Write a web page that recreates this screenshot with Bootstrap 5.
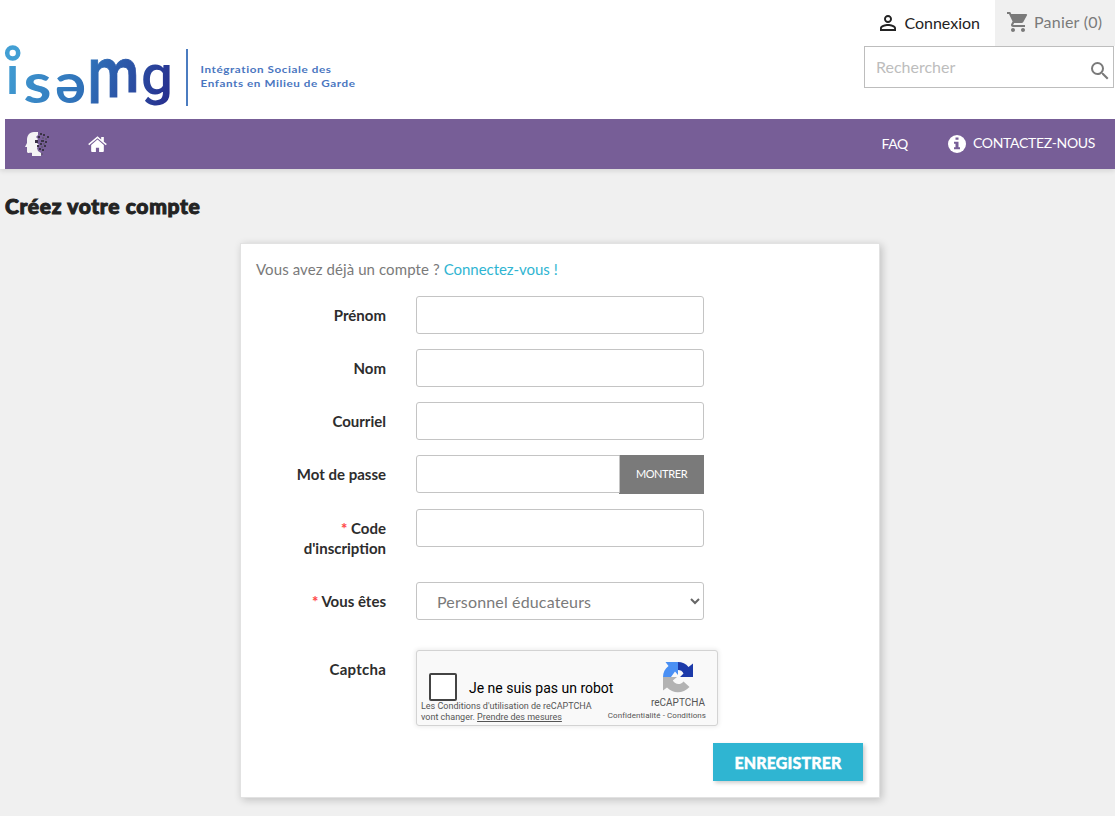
<!DOCTYPE html>
<html lang="fr">
<head>
  <meta charset="UTF-8" />
  <meta name="viewport" content="width=device-width, initial-scale=1" />
  <title>ISEMG - Créez votre compte</title>
  <link href="https://cdn.jsdelivr.net/npm/bootstrap@5.3.0/dist/css/bootstrap.min.css" rel="stylesheet" />
  <style>
    body {
      background-color: #f0f0f0;
      color: #7a7a7a;
      font-family: Lato, "Open Sans", sans-serif;
      font-size: 15px;
      line-height: 20px;
      height: 816px;
      overflow: hidden;
    }
    .site-header {
      height: 169px;
      background: #fff;
      box-shadow: 0 2px 5px 0 rgba(0, 0, 0, .11);
    }
    .header-top {
      height: 119px;
    }
    .site-logo {
      width: 365px;
      height: 75px;
      margin-top: 40px;
      overflow: visible;
    }
    .header-tools {
      width: 251px;
    }
    .user-links {
      height: 46px;
    }
    .login-link {
      color: #232323;
      font-size: 16px;
      padding-right: 15px;
    }
    .cart-link {
      width: 120px;
      background: #f0f0f0;
      font-size: 16px;
      padding: 0 0 2px 11px;
      letter-spacing: .22px;
    }
    .search-box {
      width: 250px;
      height: 42px;
      border: 1px solid #bdbdbd;
      padding: 0 1px 0 11px;
    }
    .search-box input {
      width: 200px;
      padding: 0;
      font-size: 16px;
    }
    .search-box input::placeholder {
      color: #bdbdbd;
    }
    .main-menu {
      height: 50px;
      margin-left: 5px;
      padding: 0 20px;
      background: #775e97;
      color: #fff;
      font-size: 14px;
    }
    .menu-home {
      margin-left: 38px;
      margin-top: 1px;
    }
    .menu-faq {
      letter-spacing: -.3px;
      margin-right: 40px;
    }
    .menu-info {
      margin-right: 7px;
    }
    .menu-contact {
      letter-spacing: -.33px;
      padding-bottom: 2px;
    }
    .page-title {
      margin: 26px 0 0 5px;
      font-family: Lato, sans-serif;
      font-size: 21px;
      line-height: 22px;
      font-weight: 900;
      letter-spacing: .66px;
      color: #232323;
      -webkit-text-stroke: 1px #232323;
    }
    .account-box {
      width: 640px;
      height: 555px;
      margin: 26px 0 0 240px;
      padding: 15px 16px 0 15px;
      background: #fff;
      border: 1px solid #e2e2e2;
      box-shadow: 2px 2px 8px 0 rgba(0, 0, 0, .2);
    }
    .have-account {
      margin-bottom: 17px;
      letter-spacing: .09px;
    }
    .link-cyan {
      color: #2fb5d2;
      letter-spacing: -.03px;
    }
    .form-line {
      height: 38px;
      margin-bottom: 15px;
    }
    .form-line label {
      flex: 0 0 130px;
      margin-right: 30px;
      text-align: right;
      font-weight: 700;
      color: #2d2d2d;
      padding-top: 9px;
    }
    .form-line .form-control {
      width: 288px;
      height: 38px;
      border-color: #c4c4c4;
      border-radius: 3px;
    }
    .form-line .input-group {
      width: 288px;
    }
    .line-code {
      height: 58px;
      margin-top: 16px;
    }
    .line-captcha {
      height: 76px;
      margin-top: 30px;
      margin-bottom: 17px;
    }
    .line-captcha label {
      letter-spacing: .25px;
    }
    .req {
      color: #ff4c4c;
      font-weight: 900;
    }
    .btn-show {
      width: 85px;
      height: 39px;
      padding: 0;
      border: 0;
      background: #7a7a7a;
      color: #fff;
      font-size: 11px;
      line-height: 18px;
      padding-bottom: 2px;
      letter-spacing: -.4px;
    }
    .role-select {
      padding: 2px 3px 0 20px;
      font-size: 16px;
      letter-spacing: .15px;
      color: #7a7a7a;
      appearance: none;
      background: #fff url("data:image/svg+xml,%3Csvg xmlns='http://www.w3.org/2000/svg' viewBox='0 0 10 7'%3E%3Cpath d='M1 1l4 4 4-4' fill='none' stroke='%23666' stroke-width='2'/%3E%3C/svg%3E") no-repeat right 3px center / 10px 7px;
    }
    .captcha-box {
      width: 302px;
      height: 76px;
      background: #f9f9f9;
      border: 1px solid #d3d3d3;
      border-radius: 3px;
      box-shadow: 0 0 4px 1px rgba(0, 0, 0, .08);
      font-family: Roboto, sans-serif;
      color: #555;
    }
    .captcha-left {
      width: 190px;
      padding: 22px 0 0 4px;
    }
    .robot-check {
      width: 28px;
      height: 28px;
      margin-left: 8px;
      border: 2px solid #444;
      border-radius: 2px;
      background: #fff;
    }
    .robot-text {
      padding: 2px 0 0 12px;
      font-size: 14px;
      color: #000;
      white-space: nowrap;
    }
    .captcha-terms {
      font-size: 9px;
      line-height: 11px;
      white-space: nowrap;
    }
    .captcha-terms a {
      color: #555;
    }
    .captcha-right {
      width: 108px;
      padding: 11px 12px 0 0;
    }
    .captcha-mark {
      margin-right: 12px;
    }
    .captcha-brand {
      margin-top: 3px;
      font-size: 10px;
      line-height: 13px;
    }
    .captcha-links {
      margin: 2px -1px 0 0;
      font-size: 8px;
      line-height: 10px;
      letter-spacing: .07px;
      white-space: nowrap;
    }
    .btn-save {
      width: 150px;
      height: 38px;
      padding: 1px 0 0;
      border: 0;
      background: #2fb5d2;
      color: #fff;
      font-size: 16px;
      font-weight: 900;
      letter-spacing: .1px;
      -webkit-text-stroke: .4px #fff;
      box-shadow: 2px 2px 4px 0 rgba(0, 0, 0, .2);
    }
  </style>
</head>
<body>
  <header class="site-header">
    <div class="header-top d-flex justify-content-between align-items-start">
      <svg class="site-logo" viewBox="0 40 365 75">
        <defs>
          <linearGradient id="logoGrad" gradientUnits="userSpaceOnUse" x1="5" y1="55" x2="165" y2="110">
            <stop offset="0" stop-color="#429fd4" />
            <stop offset=".5" stop-color="#2f70b8" />
            <stop offset="1" stop-color="#27308f" />
          </linearGradient>
        </defs>
        <circle cx="12.700" cy="53" r="5.500" fill="none" stroke="#429fd4" stroke-width="4.600" />
        <rect x="9.300" y="66" width="6.500" height="28" fill="url(#logoGrad)" />
        <g fill="url(#logoGrad)" font-family="Lato" font-weight="700">
          <text x="23.500" y="102.500" font-size="56" textLength="28" lengthAdjust="spacingAndGlyphs">s</text>
          <text x="55" y="102.500" font-size="56" textLength="31" lengthAdjust="spacingAndGlyphs">ə</text>
          <text x="87.500" y="103" font-size="81" textLength="52" lengthAdjust="spacingAndGlyphs" font-family="Roboto" font-weight="500" stroke="url(#logoGrad)" stroke-width=".8">m</text>
        </g>
        <!-- the legs of the m get shorter from left to right -->
        <path fill="#fff" d="M103 97.500H121V92.500H140V105H103Z" />
        <text x="141" y="93.500" font-size="55" textLength="32" lengthAdjust="spacingAndGlyphs" fill="url(#logoGrad)" font-family="Roboto" font-weight="500">g</text>
        <rect x="186" y="49" width="2" height="57" fill="#4b7cc0" />
        <g fill="#4a76bf" font-family="Lato" font-weight="700" font-size="10">
          <text x="200.500" y="72.500" textLength="131" lengthAdjust="spacingAndGlyphs" letter-spacing=".5">Intégration Sociale des</text>
          <text x="200.500" y="87" textLength="155" lengthAdjust="spacingAndGlyphs" letter-spacing=".5">Enfants en Milieu de Garde</text>
        </g>
      </svg>
      <div class="header-tools">
        <div class="user-links d-flex justify-content-end">
          <a class="login-link d-flex align-items-center text-decoration-none" href="#">
            <svg class="me-1" width="24" height="24" viewBox="0 0 24 24" fill="#232323"><path d="M12 5.900a2.100 2.100 0 1 1 0 4.200 2.100 2.100 0 0 1 0-4.200m0 9c2.970 0 6.100 1.460 6.100 2.100v1.100H5.900V17c0-.640 3.130-2.100 6.100-2.100M12 4C9.790 4 8 5.790 8 8s1.790 4 4 4 4-1.790 4-4-1.790-4-4-4zm0 9c-2.670 0-8 1.340-8 4v3h16v-3c0-2.660-5.330-4-8-4z" /></svg>
            <span>Connexion</span>
          </a>
          <div class="cart-link d-flex align-items-center">
            <svg class="me-1" width="24" height="24" viewBox="0 0 24 24" fill="#7a7a7a"><path d="M7 18c-1.100 0-1.990.900-1.990 2S5.900 22 7 22s2-.900 2-2-.900-2-2-2zM1 2v2h2l3.600 7.590-1.350 2.450c-.160.280-.250.610-.250.960 0 1.100.900 2 2 2h12v-2H7.420c-.140 0-.250-.110-.250-.250l.030-.120.900-1.630h7.450c.750 0 1.410-.410 1.750-1.030l3.580-6.490A1 1 0 0 0 20 4H5.210l-.940-2H1zm16 16c-1.100 0-1.990.900-1.990 2s.890 2 1.990 2 2-.900 2-2-.900-2-2-2z" /></svg>
            <span>Panier (0)</span>
          </div>
        </div>
        <div class="search-box d-flex align-items-center justify-content-between bg-white">
          <input class="border-0" type="text" placeholder="Rechercher" />
          <svg class="mt-2" width="24" height="24" viewBox="0 0 24 24" fill="#7a7a7a"><path d="M15.500 14h-.790l-.280-.270A6.470 6.470 0 0 0 16 9.500 6.500 6.500 0 1 0 9.500 16c1.610 0 3.090-.590 4.230-1.570l.270.280v.790l5 4.990L20.490 19l-4.990-5zm-6 0a4.500 4.500 0 1 1 0-9 4.500 4.500 0 0 1 0 9z" /></svg>
        </div>
      </div>
    </div>
    <nav class="main-menu d-flex align-items-center">
      <svg width="25" height="26" viewBox="0 0 25 26">
        <path fill="#f5f5f5" d="M13 1H9C4 1 2 5 2 9L2 12 0 16H2L2 21C3 23 6 21 7 22V25H16V22L13 20 12 17 14 14 11 11 13 8 11 6 13 4Z" />
        <path fill="#3b3346" d="M13 5h2v2h-2zM10 9h3v3h-3zM15 2h2v2h-2zM18 3h2v2h-2zM22 5h2v2h-2zM16 9h3v2h-3zM20 10h2v2h-2zM12 14h2v2h-2zM15 12h2v2h-2zM19 14h2v2h-2zM14 17h2v2h-2zM17 18h2v2h-2z" />
        <path fill="#66587a" d="M17 6h2v2h-2zM20 7h2v2h-2zM18 12h2v2h-2zM16 15h2v2h-2zM16 22h2v2h-2z" />
      </svg>
      <svg class="menu-home me-auto" width="19" height="17" viewBox="0 0 18 16" fill="#fff"><path d="M9 3.300L3 8.400V14.200a.8.800 0 0 0 .8.800H7.500V11h3v4h3.700a.8.800 0 0 0 .8-.8V8.400Z" /><path d="M9 .3L.2 7.600l.9 1L9 2.100l7.900 6.500.9-1L15 5.300V.8H12.500V3.200Z" /></svg>
      <span class="menu-faq">FAQ</span>
      <svg class="menu-info" width="18" height="18" viewBox="0 0 18 18"><circle cx="9" cy="9" r="9" fill="#fff" /><path fill="#775e97" d="M7.500 2.500h3v2.300h-3zM6 6.700h4.500v5.600H12v2H6v-2h1.500V8.700H6z" /></svg>
      <span class="menu-contact">CONTACTEZ-NOUS</span>
    </nav>
  </header>

  <h1 class="page-title">Créez votre compte</h1>

  <section class="account-box">
    <p class="have-account">Vous avez déjà un compte ? <a class="link-cyan text-decoration-none" href="#">Connectez-vous !</a></p>
    <form>
      <div class="form-line d-flex">
        <label for="firstname">Prénom</label>
        <input class="form-control" id="firstname" type="text" />
      </div>
      <div class="form-line d-flex">
        <label for="lastname">Nom</label>
        <input class="form-control" id="lastname" type="text" />
      </div>
      <div class="form-line d-flex">
        <label for="email">Courriel</label>
        <input class="form-control" id="email" type="email" />
      </div>
      <div class="form-line d-flex">
        <label for="password">Mot de passe</label>
        <div class="input-group flex-nowrap">
          <input class="form-control" id="password" type="password" />
          <button class="btn-show flex-shrink-0" type="button">MONTRER</button>
        </div>
      </div>
      <div class="form-line line-code d-flex">
        <label for="code"><span class="req">*</span> Code<br />d'inscription</label>
        <input class="form-control" id="code" type="text" />
      </div>
      <div class="form-line d-flex">
        <label for="role"><span class="req">*</span> Vous êtes</label>
        <select class="form-control role-select" id="role"><option>Personnel éducateurs</option></select>
      </div>
      <div class="form-line line-captcha d-flex">
        <label>Captcha</label>
        <div class="captcha-box d-flex">
          <div class="captcha-left">
            <div class="d-flex align-items-center">
              <div class="robot-check flex-shrink-0"></div>
              <div class="robot-text">Je ne suis pas un robot</div>
            </div>
            <div class="captcha-terms">Les Conditions d'utilisation de reCAPTCHA<br />vont changer. <a href="#">Prendre des mesures</a></div>
          </div>
          <div class="captcha-right ms-auto d-flex flex-column align-items-end">
            <svg class="captcha-mark" width="30" height="31" viewBox="0 0 30 31">
              <path fill="#1c3aa9" d="M15 0C19 0 23 1.600 25.500 5L30 1.500V15H17L20.500 11.500C19.500 9 17.500 8 15 8Z" />
              <path fill="#4a90f4" d="M15 0H2.500L5.500 4C2 6.500 0 10.500 0 15H8L12 9.500 15 13Z" />
              <path fill="#b3b3b3" d="M0 15V28.500L4 25.500C10 32 20 32 26.500 25L20.500 19.500C17 23.500 12 22.500 9.800 18.500L14 15Z" />
            </svg>
            <div class="captcha-brand">reCAPTCHA</div>
            <div class="captcha-links">Confidentialité - Conditions</div>
          </div>
        </div>
      </div>
      <div class="d-flex justify-content-end">
        <button class="btn-save" type="submit">ENREGISTRER</button>
      </div>
    </form>
  </section>
</body>
</html>
